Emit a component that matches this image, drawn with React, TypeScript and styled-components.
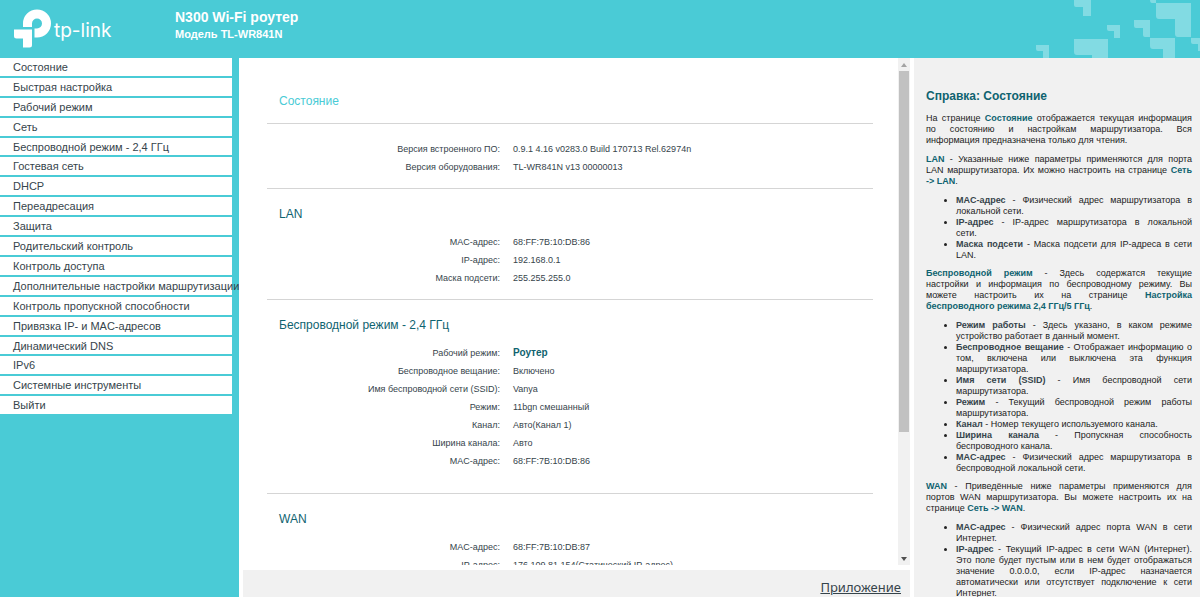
import React from "react";
import styled, { createGlobalStyle } from "styled-components";

const teal = "#4acbd6";
const deepTeal = "#0f6370";
const lightTeal = "#82dbe3";
const panelGrey = "#f1f1f1";

const GlobalStyle = createGlobalStyle`
  * { box-sizing: border-box; }
  body {
    margin: 0;
    background: ${teal};
    color: #36444b;
    font-family: "Liberation Sans", Arial, sans-serif;
    font-size: 9px;
  }
`;

const Page = styled.div`
  display: flex;
  flex-direction: column;
  height: 100vh;
  overflow: hidden;
`;

const Header = styled.header`
  display: flex;
  flex: none;
  height: 58px;
  color: #fff;
`;

const Brand = styled.a`
  display: flex;
  width: 175px;
  color: #fff;
  text-decoration: none;
`;

const BrandMark = styled.svg`
  flex: none;
  width: 54px;
  height: 58px;
`;

const BrandName = styled.span`
  padding-top: 18px;
  font-family: Inter, sans-serif;
  font-size: 19px;
  line-height: 26px;
`;

const Product = styled.div`
  flex: 1;
  padding-top: 9px;
  font-weight: bold;
`;

const ProductName = styled.h1`
  margin: 0;
  font-size: 14px;
  line-height: 17px;
`;

const ProductModel = styled.p`
  margin: 0;
  font-size: 11px;
  line-height: 16px;
`;

const Mosaic = styled.svg`
  flex: none;
  width: 170px;
  height: 58px;
`;

const Body = styled.div`
  display: flex;
  flex: 1;
  min-height: 0;
`;

const Sidebar = styled.nav`
  flex: none;
  width: 239px;
  padding-right: 7px;
`;

const Menu = styled.ul`
  display: grid;
  grid-template-columns: minmax(0, 1fr);
  grid-auto-rows: 1fr;
  min-height: 60vh;
  margin: 0;
  padding: 0;
  list-style: none;
`;

const MenuItem = styled.li`
  display: flex;
  background: #fff;
  border-bottom: 2px solid ${teal};
`;

const MenuLink = styled.a`
  display: flex;
  flex: 1;
  align-items: center;
  min-width: 0;
  padding-left: 13px;
  color: #36444b;
  font-size: 11px;
  line-height: 16px;
  white-space: nowrap;
  text-decoration: none;
`;

const Center = styled.div`
  display: flex;
  flex: 1;
  flex-direction: column;
  min-width: 0;
  padding-right: 4px;
  background: #fff;
`;

const Viewport = styled.div`
  display: flex;
  flex: 1;
  min-height: 0;
  margin-bottom: 5px;
`;

const Content = styled.main`
  flex: 1;
  overflow-y: auto;
  padding: 32px 25px 0 28px;
  scrollbar-width: none;
`;

const Scrollbar = styled.div`
  display: flex;
  flex: none;
  flex-direction: column;
  width: 12px;
  background: ${panelGrey};
`;

const ScrollButton = styled.button`
  display: flex;
  flex: none;
  align-items: center;
  justify-content: center;
  height: 13px;
  padding: 0;
  border: 0;
  background: none;
`;

const Track = styled.div`
  flex: 1;
  padding: 0 1px;
`;

const Thumb = styled.div`
  height: 75%;
  background: #c1c1c1;
`;

const PageTitle = styled.h2`
  margin: 0;
  padding: 0 12px 11px;
  color: ${teal};
  font-size: 12px;
  font-weight: normal;
  line-height: 22px;
`;

const Section = styled.section<{ $bottom?: number }>`
  padding: 16px 0 ${(p) => p.$bottom ?? 12}px;
  border-top: 1px solid #d5d5d5;
`;

const SectionTitle = styled.h3`
  margin: 0 0 10px;
  padding: 0 12px;
  color: ${deepTeal};
  font-size: 12px;
  font-weight: normal;
  line-height: 18px;
`;

const Table = styled.table`
  width: 100%;
  border-collapse: collapse;
  font-size: 9px;
  line-height: 18px;
`;

const Label = styled.th`
  width: 233px;
  padding: 0;
  font-weight: normal;
  text-align: right;
`;

const Value = styled.td<{ $strong?: boolean }>`
  padding: 0 0 0 13px;
  ${(p) => p.$strong && `color: ${deepTeal}; font-size: 10px; font-weight: bold;`}
`;

const Footer = styled.footer`
  display: flex;
  flex: none;
  align-items: center;
  justify-content: flex-end;
  height: 27px;
  margin-left: 4px;
  padding: 6px 9px 0 0;
  background: ${panelGrey};
`;

const AppLink = styled.a`
  color: #36444b;
  font-family: "Noto Sans", sans-serif;
  font-size: 13px;
  line-height: 18px;
`;

const Help = styled.aside`
  flex: none;
  width: 286px;
  overflow: hidden;
  padding: 30px 8px 0 12px;
  background: ${panelGrey};
  color: #222;
  line-height: 11px;
  text-align: justify;
`;

const HelpTitle = styled.h2`
  margin: 0 0 9px;
  color: ${deepTeal};
  font-size: 12px;
  line-height: 16px;
`;

const HelpText = styled.p`
  margin: 0 0 8px;
`;

const Line = styled.span`
  display: block;
  text-align-last: justify;
`;

const HelpTopic = styled.strong`
  color: ${deepTeal};
`;

const Unbroken = styled.span`
  white-space: nowrap;
`;

const HelpList = styled.ul`
  margin: 0 0 7px;
  padding-left: 30px;
`;

const HelpTerm = styled.strong`
  color: #36444b;
`;

const menu = [
  "Состояние",
  "Быстрая настройка",
  "Рабочий режим",
  "Сеть",
  "Беспроводной режим - 2,4 ГГц",
  "Гостевая сеть",
  "DHCP",
  "Переадресация",
  "Защита",
  "Родительский контроль",
  "Контроль доступа",
  "Дополнительные настройки маршрутизации",
  "Контроль пропускной способности",
  "Привязка IP- и MAC-адресов",
  "Динамический DNS",
  "IPv6",
  "Системные инструменты",
  "Выйти",
];

type Row = { label: string; value: string; strong?: boolean };
type SectionData = { title?: string; bottom?: number; rows: Row[] };

const sections: SectionData[] = [
  {
    rows: [
      { label: "Версия встроенного ПО:", value: "0.9.1 4.16 v0283.0 Build 170713 Rel.62974n" },
      { label: "Версия оборудования:", value: "TL-WR841N v13 00000013" },
    ],
  },
  {
    title: "LAN",
    rows: [
      { label: "MAC-адрес:", value: "68:FF:7B:10:DB:86" },
      { label: "IP-адрес:", value: "192.168.0.1" },
      { label: "Маска подсети:", value: "255.255.255.0" },
    ],
  },
  {
    title: "Беспроводной режим - 2,4 ГГц",
    bottom: 23,
    rows: [
      { label: "Рабочий режим:", value: "Роутер", strong: true },
      { label: "Беспроводное вещание:", value: "Включено" },
      { label: "Имя беспроводной сети (SSID):", value: "Vanya" },
      { label: "Режим:", value: "11bgn смешанный" },
      { label: "Канал:", value: "Авто(Канал 1)" },
      { label: "Ширина канала:", value: "Авто" },
      { label: "MAC-адрес:", value: "68:FF:7B:10:DB:86" },
    ],
  },
  {
    title: "WAN",
    rows: [
      { label: "MAC-адрес:", value: "68:FF:7B:10:DB:87" },
      { label: "IP-адрес:", value: "176.109.81.154(Статический IP-адрес)" },
    ],
  },
];

type Term = [term: string, text: string];

const wirelessTerms: Term[] = [
  ["Режим работы", "Здесь указано, в каком режиме устройство работает в данный момент."],
  ["Беспроводное вещание", "Отображает информацию о том, включена или выключена эта функция маршрутизатора."],
  ["Имя сети (SSID)", "Имя беспроводной сети маршрутизатора."],
  ["Режим", "Текущий беспроводной режим работы маршрутизатора."],
  ["Канал", "Номер текущего используемого канала."],
  ["Ширина канала", "Пропускная способность беспроводного канала."],
  ["MAC-адрес", "Физический адрес маршрутизатора в беспроводной локальной сети."],
];

const wanTerms: Term[] = [
  ["MAC-адрес", "Физический адрес порта WAN в сети Интернет."],
  [
    "IP-адрес",
    "Текущий IP-адрес в сети WAN (Интернет). Это поле будет пустым или в нем будет отображаться значение 0.0.0.0, если IP-адрес назначается автоматически или отсутствует подключение к сети Интернет.",
  ],
];

function Terms({ items }: { items: Term[] }) {
  return (
    <HelpList>
      {items.map(([term, text]) => (
        <li key={term}>
          <HelpTerm>{term}</HelpTerm> - {text}
        </li>
      ))}
    </HelpList>
  );
}

export default function App() {
  return (
    <Page>
      <GlobalStyle />
      <Header>
        <Brand href="#home">
          <BrandMark viewBox="0 0 54 58" fill="#fff" aria-hidden="true">
            <path d="M23 27V23.5A14 14 0 0 1 51 23.5A14 14 0 0 1 37 37.5H34.5V28.5H37A5 5 0 1 0 32 23.5V27Z" />
            <path d="M14 29.5H32V45A2.5 2.5 0 0 1 29.5 47.5H23V38.5H16.5A2.5 2.5 0 0 1 14 36Z" />
          </BrandMark>
          <BrandName>tp-link</BrandName>
        </Brand>
        <Product>
          <ProductName>N300 Wi-Fi роутер</ProductName>
          <ProductModel>Модель TL-WR841N</ProductModel>
        </Product>
        <Mosaic viewBox="0 0 170 58" fill={lightTeal} aria-hidden="true">
          <path d="M44 0H61V16H53V7H46Q44 7 44 5Z" />
          <path d="M77 25H90V38H84V31H79Q77 31 77 29Z" />
          <path d="M6 45H19V58H13V51H8Q6 51 6 49Z" />
          <path d="M44 39H78V58H62V55H47Q44 55 44 52Z" />
          <path d="M104 20H120V37H115Q113 37 113 35V28H106Q104 28 104 26Z" />
          <path d="M120 0H126V3H122Q120 3 120 0Z" />
          <path d="M126 3H161V37H148Q145 37 145 34V19H129Q126 19 126 16Z" />
          <path d="M120 38H145V58H133V49H123Q120 49 120 46Z" />
          <path d="M161 38H170V51H168V44H163Q161 44 161 42Z" />
        </Mosaic>
      </Header>
      <Body>
        <Sidebar>
          <Menu>
            {menu.map((item) => (
              <MenuItem key={item}>
                <MenuLink href="#menu">{item}</MenuLink>
              </MenuItem>
            ))}
          </Menu>
        </Sidebar>
        <Center>
          <Viewport>
            <Content>
              <PageTitle>Состояние</PageTitle>
              {sections.map((section, i) => (
                <Section key={i} $bottom={section.bottom}>
                  {section.title && <SectionTitle>{section.title}</SectionTitle>}
                  <Table>
                    <tbody>
                      {section.rows.map((row) => (
                        <tr key={row.label}>
                          <Label scope="row">{row.label}</Label>
                          <Value $strong={row.strong}>{row.value}</Value>
                        </tr>
                      ))}
                    </tbody>
                  </Table>
                </Section>
              ))}
            </Content>
            <Scrollbar>
              <ScrollButton aria-label="Прокрутить вверх">
                <svg width="6" height="4" viewBox="0 0 6 4" fill="#a3a3a3">
                  <path d="M0 4L3 0L6 4Z" />
                </svg>
              </ScrollButton>
              <Track>
                <Thumb />
              </Track>
              <ScrollButton aria-label="Прокрутить вниз">
                <svg width="6" height="4" viewBox="0 0 6 4" fill="#505050">
                  <path d="M0 0L3 4L6 0Z" />
                </svg>
              </ScrollButton>
            </Scrollbar>
          </Viewport>
          <Footer>
            <AppLink href="#app">Приложение</AppLink>
          </Footer>
        </Center>
        <Help>
          <HelpTitle>Справка: Состояние</HelpTitle>
          <HelpText>
            <Line>
              На странице <HelpTopic>Состояние</HelpTopic> отображается текущая информация
            </Line>
            <Line>по состоянию и настройкам маршрутизатора. Вся</Line>
            информация предназначена только для чтения.
          </HelpText>
          <HelpText>
            <HelpTopic>LAN</HelpTopic> - Указанные ниже параметры применяются для порта LAN маршрутизатора. Их
            можно настроить на странице{" "}
            <HelpTopic>
              Сеть <Unbroken>-&gt; LAN</Unbroken>
            </HelpTopic>
            .
          </HelpText>
          <HelpList>
            <li>
              <HelpTerm>MAC-адрес</HelpTerm> - Физический адрес маршрутизатора в локальной сети.
            </li>
            <li>
              <Line>
                <HelpTerm>IP-адрес</HelpTerm> - IP-адрес маршрутизатора в локальной
              </Line>
              сети.
            </li>
            <li>
              <HelpTerm>Маска подсети</HelpTerm> - Маска подсети для IP-адреса в сети LAN.
            </li>
          </HelpList>
          <HelpText>
            <Line>
              <HelpTopic>Беспроводной режим</HelpTopic> - Здесь содержатся текущие
            </Line>
            <Line>настройки и информация по беспроводному режиму. Вы</Line>
            <Line>
              можете настроить их на странице <HelpTopic>Настройка</HelpTopic>
            </Line>
            <HelpTopic>беспроводного режима 2,4 ГГц/5 ГГц</HelpTopic>.
          </HelpText>
          <Terms items={wirelessTerms} />
          <HelpText>
            <HelpTopic>WAN</HelpTopic> - Приведённые ниже параметры применяются для портов WAN маршрутизатора.
            Вы можете настроить их на странице <HelpTopic>Сеть -&gt; WAN</HelpTopic>.
          </HelpText>
          <Terms items={wanTerms} />
        </Help>
      </Body>
    </Page>
  );
}
